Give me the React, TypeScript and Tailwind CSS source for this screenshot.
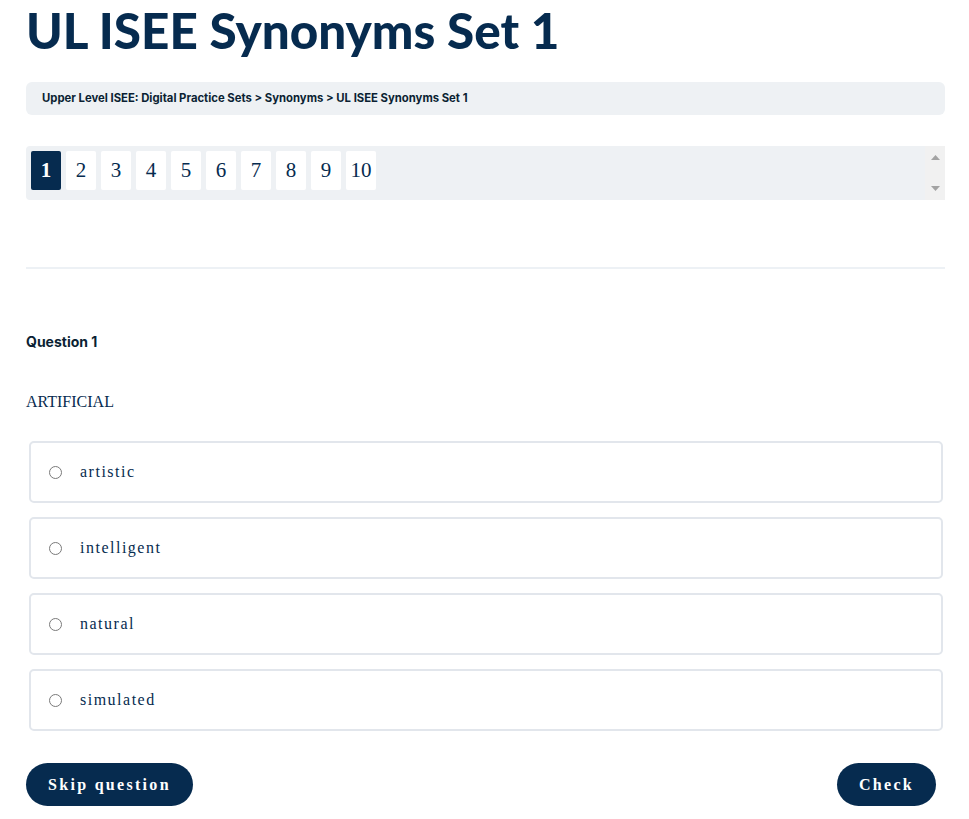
const options = ["artistic", "intelligent", "natural", "simulated"];
const pages = [1, 2, 3, 4, 5, 6, 7, 8, 9, 10];

export default function App() {
  return (
    <div className="min-h-screen bg-white pl-[26px] pr-[24px] text-[#062b4f]">
      <h1
        className="pt-[3px] text-[49.4px] font-black leading-[54px]"
        style={{ fontFamily: "Lato, sans-serif" }}
      >
        UL ISEE Synonyms Set 1
      </h1>

      <div
        className="mt-[25px] flex h-[33px] items-center rounded-md bg-[#eef1f4] px-[16px] text-[11.3px] font-bold text-[#0b1f33]"
        style={{ fontFamily: "Inter, sans-serif" }}
      >
        Upper Level ISEE: Digital Practice Sets &gt; Synonyms &gt; UL ISEE Synonyms Set 1
      </div>

      <div className="mt-[31px] flex h-[54px] rounded-sm bg-[#eef1f4]">
        <div className="flex flex-1 gap-[5px] p-[5px]">
          {pages.map((p) => (
            <div
              key={p}
              className={
                p === 1
                  ? "flex h-[39px] w-[30px] items-center justify-center rounded-[2px] bg-[#062b4f] text-[21px] font-bold text-white"
                  : "flex h-[39px] w-[30px] items-center justify-center rounded-[2px] bg-white text-[21px] text-[#062b4f]"
              }
              style={{ fontFamily: "'Liberation Serif', serif" }}
            >
              {p}
            </div>
          ))}
        </div>
        <div className="flex w-[20px] flex-col items-center justify-between bg-[#f1f1f1] py-[9px]">
          <svg width="9" height="5" viewBox="0 0 9 5">
            <path d="M0 5 L4.5 0 L9 5 Z" fill="#a3a3a3" />
          </svg>
          <svg width="9" height="5" viewBox="0 0 9 5">
            <path d="M0 0 L4.5 5 L9 0 Z" fill="#a3a3a3" />
          </svg>
        </div>
      </div>

      <div className="mt-[67px] h-[2px] bg-[#edf1f5]" />

      <div
        className="mt-[62px] text-[14px] font-bold text-[#0b1f33]"
        style={{ fontFamily: "Inter, sans-serif" }}
      >
        Question 1
      </div>

      <div
        className="mt-[38px] text-[16px] text-[#062b4f]"
        style={{ fontFamily: "'Liberation Serif', serif" }}
      >
        ARTIFICIAL
      </div>

      <div className="mt-[27px] flex flex-col gap-[14px] pl-[3px] pr-[2px]">
        {options.map((o) => (
          <label
            key={o}
            className="flex h-[62px] items-center gap-[18px] rounded-[5px] border-2 border-[#e2e6ec] px-[18px]"
          >
            <span className="h-[13px] w-[13px] rounded-full border border-[#7a7a7a] bg-white" />
            <span
              className="text-[16px] tracking-[1.5px] text-[#062b4f]"
              style={{ fontFamily: "'Liberation Serif', serif" }}
            >
              {o}
            </span>
          </label>
        ))}
      </div>

      <div className="mt-[32px] flex items-center justify-between pr-[9px]">
        <button
          className="h-[43px] rounded-full bg-[#062b4f] px-[22px] text-[16px] font-bold tracking-[2.3px] text-white"
          style={{ fontFamily: "'Liberation Serif', serif" }}
        >
          Skip question
        </button>
        <button
          className="h-[43px] rounded-full bg-[#062b4f] px-[22px] text-[16px] font-bold tracking-[2.3px] text-white"
          style={{ fontFamily: "'Liberation Serif', serif" }}
        >
          Check
        </button>
      </div>
    </div>
  );
}
